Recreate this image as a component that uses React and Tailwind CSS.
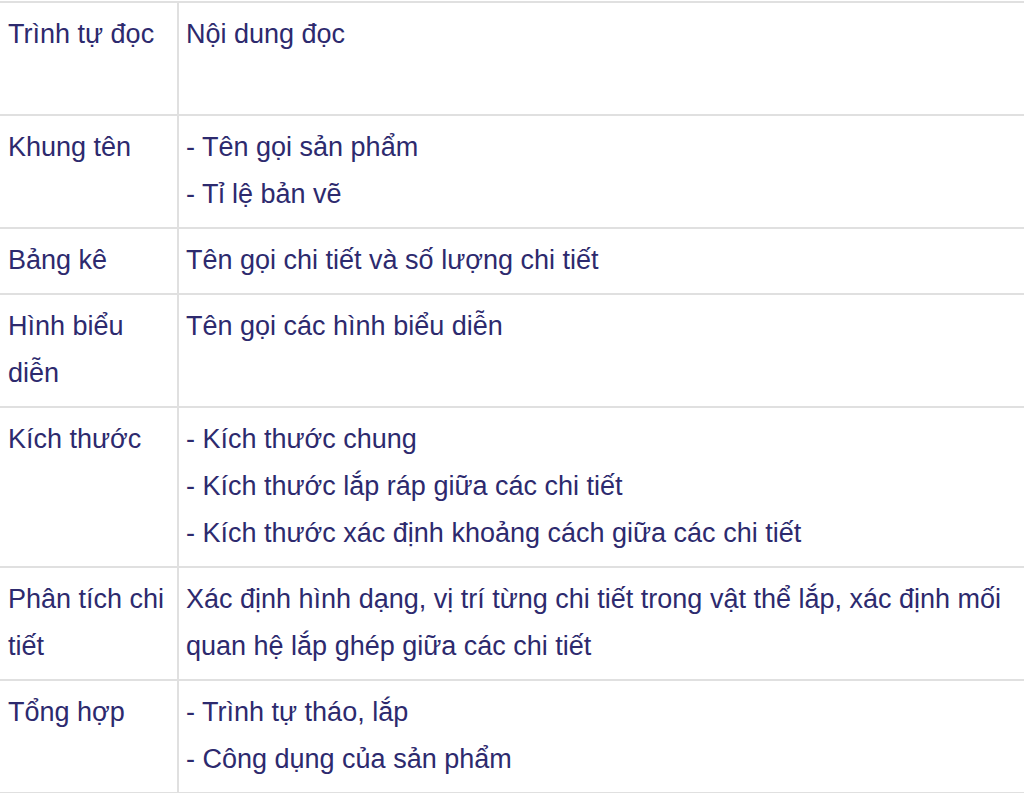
import React from "react";

const rows = [
  { label: ["Trình tự đọc"], content: ["Nội dung đọc"], lines: 2 },
  { label: ["Khung tên"], content: ["- Tên gọi sản phẩm", "- Tỉ lệ bản vẽ"] },
  { label: ["Bảng kê"], content: ["Tên gọi chi tiết và số lượng chi tiết"] },
  { label: ["Hình biểu", "diễn"], content: ["Tên gọi các hình biểu diễn"] },
  {
    label: ["Kích thước"],
    content: [
      "- Kích thước chung",
      "- Kích thước lắp ráp giữa các chi tiết",
      "- Kích thước xác định khoảng cách giữa các chi tiết",
    ],
  },
  {
    label: ["Phân tích chi", "tiết"],
    content: [
      "Xác định hình dạng, vị trí từng chi tiết trong vật thể lắp, xác định mối",
      "quan hệ lắp ghép giữa các chi tiết",
    ],
  },
  { label: ["Tổng hợp"], content: ["- Trình tự tháo, lắp", "- Công dụng của sản phẩm"] },
];

function Lines({ items, min }) {
  return (
    <div className={min ? "min-h-[94px]" : ""}>
      {items.map((t, i) => (
        <div key={i} className="whitespace-nowrap">
          {t}
        </div>
      ))}
    </div>
  );
}

export default function App() {
  return (
    <div className="w-[1024px] h-[793px] overflow-hidden bg-white pt-[1px]">
      <table
        className="w-full border-collapse text-[27px] leading-[47px] text-[#2d2a6e]"
        style={{ fontFamily: '"Liberation Sans", Arial, sans-serif' }}
      >
        <tbody>
          {rows.map((row, i) => (
            <tr key={i} className="border-t-2 border-b-2 border-[#e0e0e0]">
              <td className="w-[178px] align-top pl-[8px] pr-1 pt-[8px] pb-[9px] border-r-2 border-[#e0e0e0]">
                <Lines items={row.label} min={row.lines === 2} />
              </td>
              <td className="align-top pl-[7px] pt-[8px] pb-[9px]">
                <Lines items={row.content} min={row.lines === 2} />
              </td>
            </tr>
          ))}
        </tbody>
      </table>
    </div>
  );
}
